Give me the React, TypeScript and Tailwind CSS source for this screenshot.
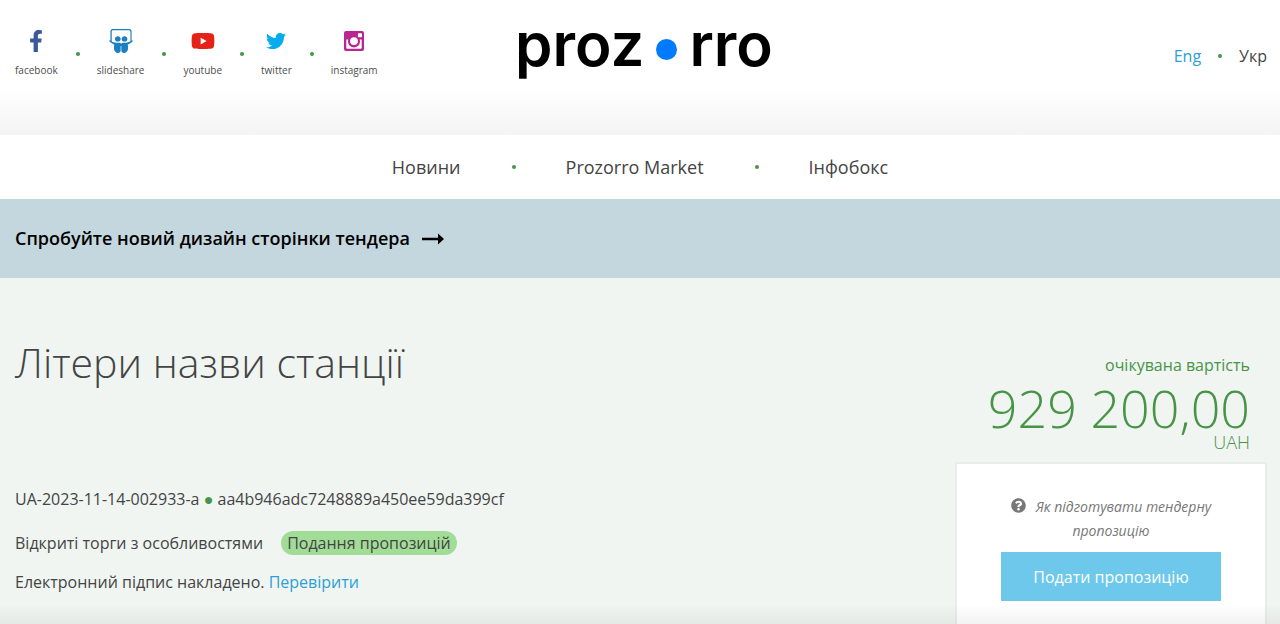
import type { ReactNode } from "react";
import { FaFacebookF, FaTwitter, FaYoutube, FaSlideshare, FaQuestionCircle } from "react-icons/fa";

function InstagramIcon() {
  return (
    <svg viewBox="0 0 20 20" className="h-5 w-5" fill="#b8268f" aria-hidden="true">
      <path
        fillRule="evenodd"
        d="M2 0h16a2 2 0 0 1 2 2v16a2 2 0 0 1-2 2H2a2 2 0 0 1-2-2V2a2 2 0 0 1 2-2Zm12.7 2.3a.8.8 0 0 0-.8.8v2.4c0 .5.3.8.8.8h2.5c.5 0 .8-.3.8-.8V3.1a.8.8 0 0 0-.8-.8ZM2.3 8.5v8.4c0 .4.3.8.8.8h13.8c.4 0 .8-.4.8-.8V8.5h-2c.2.6.3 1.2.3 1.9a6 6 0 0 1-12 0c0-.7.1-1.3.3-1.9ZM10 6.2a3.9 3.9 0 1 0 0 7.8 3.9 3.9 0 0 0 0-7.8Z"
      />
    </svg>
  );
}

const socials: { name: string; icon: ReactNode }[] = [
  { name: "facebook", icon: <FaFacebookF className="h-[22px] w-[22px] text-[#3b5998]" /> },
  { name: "slideshare", icon: <FaSlideshare className="h-6 w-6 text-[#1b7fc0]" /> },
  { name: "youtube", icon: <FaYoutube className="h-6 w-6 text-[#e62117]" /> },
  { name: "twitter", icon: <FaTwitter className="h-5 w-5 text-[#06aced]" /> },
  { name: "instagram", icon: <InstagramIcon /> },
];

const sections = ["Новини", "Prozorro Market", "Інфобокс"];

function Dot() {
  return <span className="h-1 w-1 shrink-0 rounded-full bg-[#489446]" aria-hidden="true" />;
}

function Header() {
  return (
    <header className="grid grid-cols-[1fr_auto_1fr] items-start bg-linear-to-b from-white from-65% to-[#f4f4f4] pr-[13px] pb-[51px] pl-[15px]">
      <ul className="flex items-center gap-[18px] pt-[30px]">
        {socials.map(({ name, icon }, i) => (
          <li key={name} className="flex items-center gap-[17px]">
            {i > 0 && <Dot />}
            <a href={`#${name}`} className="flex flex-col items-center gap-[10px] text-[10px] leading-4 text-[#4d4d4d]">
              <span className="flex h-[22px] items-center">{icon}</span>
              {name}
            </a>
          </li>
        ))}
      </ul>
      <a
        href="#home"
        aria-label="prozorro"
        className="flex items-center pt-1 pl-[6px] font-['Inter',sans-serif] text-[60px] leading-[80px] font-semibold text-black"
      >
        proz
        <span className="mx-3 mt-[10px] h-[21px] w-[21px] rounded-full bg-[#007bff]" />
        rro
      </a>
      <nav aria-label="Мова" className="flex items-center justify-end gap-[17px] pt-11 text-base leading-6">
        <a href="#en" className="text-[#2d9fd5]">Eng</a>
        <Dot />
        <a href="#uk">Укр</a>
      </nav>
    </header>
  );
}

export default function App() {
  return (
    <div className="flex h-screen flex-col overflow-hidden bg-white font-['Open_Sans','Noto_Sans',sans-serif] text-[#444]">
      <Header />
      <nav aria-label="Розділи" className="flex items-center justify-center gap-[51px] py-[18px] text-lg leading-7">
        {sections.map((s, i) => (
          <div key={s} className="flex items-center gap-[50px]">
            {i > 0 && <Dot />}
            <a href={`#${i}`}>{s}</a>
          </div>
        ))}
      </nav>
      <div className="bg-[#c4d7de] px-[15px] py-[26px]">
        <a href="#new-design" className="flex items-center gap-3 text-lg leading-[27px] font-semibold text-black">
          Спробуйте новий дизайн сторінки тендера
          <svg viewBox="0 0 22 12" className="h-3 w-[22px]" aria-hidden="true">
            <path d="M0 4.700h16V0.500L22 6l-6 5.500V7.300H0Z" />
          </svg>
        </a>
      </div>
      <main className="relative flex flex-1 items-stretch justify-between bg-[#f0f5f2] pr-[13px] pl-[15px]">
        <section className="pt-[59px] text-base leading-6">
          <h1 className="text-[41px] leading-[50px] font-light">Літери назви станції</h1>
          <p className="mt-[100px]">
            UA-2023-11-14-002933-a <span className="text-[#489446]">●</span> aa4b946adc7248889a450ee59da399cf
          </p>
          <p className="mt-5 flex items-center gap-[18px]">
            Відкриті торги з особливостями
            <span className="rounded-full bg-[#a2dd98] px-[6px]">Подання пропозицій</span>
          </p>
          <p className="mt-[15px]">
            Електронний підпис накладено. <a href="#verify" className="text-[#2d9fd5]">Перевірити</a>
          </p>
        </section>
        <aside className="flex w-[312px] flex-col pt-[75px]">
          <div className="pr-[17px] text-right text-[#489446]">
            <p className="text-base leading-6">очікувана вартість</p>
            <p className="mt-[6px] text-[52px] leading-[50px] font-light">929 200,00</p>
            <p className="text-lg leading-[18px] font-light">UAH</p>
          </div>
          <div className="mt-[11px] flex flex-1 flex-col items-center border-2 border-b-0 border-[#e8ecea] bg-white px-12 pt-[31px]">
            <a href="#help" className="text-center text-[14px] leading-6 font-medium text-[#777] italic">
              <FaQuestionCircle className="mr-[10px] inline h-[15px] w-[15px] align-[-1px]" />
              Як підготувати тендерну пропозицію
            </a>
            <button type="button" className="mt-[9px] h-[49px] w-[220px] bg-[#6dc8ec] text-base text-white">
              Подати пропозицію
            </button>
          </div>
        </aside>
        <div className="pointer-events-none absolute inset-x-0 bottom-0 h-5 bg-linear-to-b from-transparent to-black/5" />
      </main>
    </div>
  );
}
